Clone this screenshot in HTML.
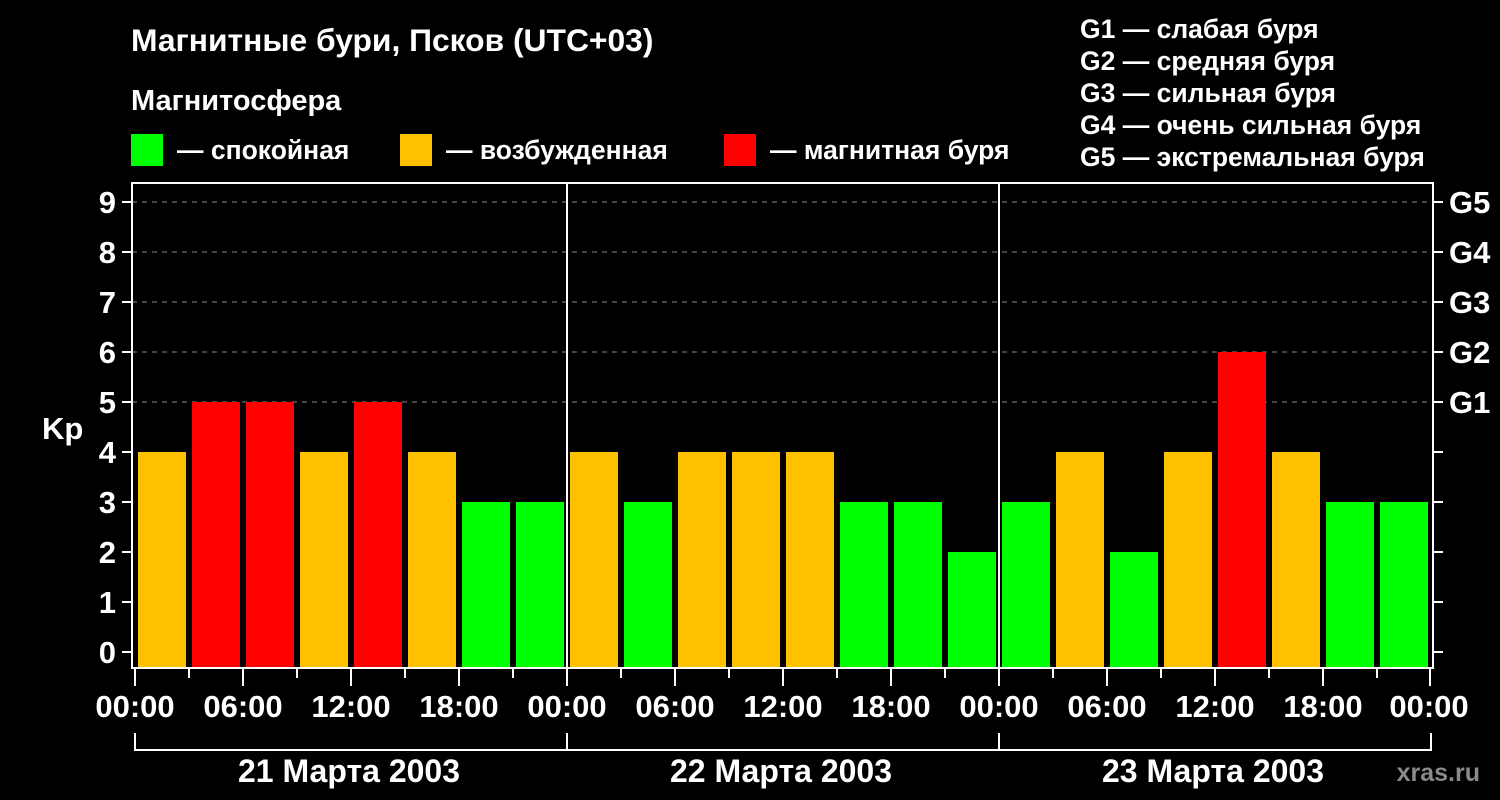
<!DOCTYPE html><html><head><meta charset="utf-8"><style>body{margin:0;background:#000;width:1500px;height:800px;overflow:hidden}svg{display:block}text{font-family:"Liberation Sans",sans-serif;font-weight:bold;fill:#fff}</style></head><body>
<svg width="1500" height="800" xmlns="http://www.w3.org/2000/svg">
<text x="131" y="51" font-size="31.8">Магнитные бури, Псков (UTC+03)</text>
<text x="131" y="110" font-size="29">Магнитосфера</text>
<rect x="131" y="134" width="32" height="32" fill="#00ff00"/><text x="177" y="159" font-size="26.5">— спокойная</text>
<rect x="400" y="134" width="32" height="32" fill="#ffc000"/><text x="446" y="159" font-size="26.5">— возбужденная</text>
<rect x="724" y="134" width="32" height="32" fill="#ff0000"/><text x="770" y="159" font-size="26.5">— магнитная буря</text>
<g font-size="26.5"><text x="1080" y="38">G1 — слабая буря</text><text x="1080" y="70">G2 — средняя буря</text><text x="1080" y="102">G3 — сильная буря</text><text x="1080" y="134">G4 — очень сильная буря</text><text x="1080" y="166">G5 — экстремальная буря</text></g>
<g stroke="#888" stroke-width="1" stroke-dasharray="5,5"><line x1="132" y1="202" x2="1432" y2="202"/><line x1="132" y1="252" x2="1432" y2="252"/><line x1="132" y1="302" x2="1432" y2="302"/><line x1="132" y1="352" x2="1432" y2="352"/><line x1="132" y1="402" x2="1432" y2="402"/></g>
<g id="bars"></g>
<g stroke="#fff" stroke-width="2" fill="none">
<rect x="132" y="183" width="1301" height="485"/>
<line x1="567" y1="183" x2="567" y2="668"/><line x1="999" y1="183" x2="999" y2="668"/>
<path d="M135 733V750H1431V733M567 733V750M999 733V750"/>
</g>
<g id="ticks" stroke="#fff" stroke-width="2"></g>
<g font-size="31" text-anchor="end" id="yl"></g>
<text x="42" y="439" font-size="31">Kp</text>
<g font-size="31" id="gl"><text x="1449" y="213">G5</text><text x="1449" y="263">G4</text><text x="1449" y="313">G3</text><text x="1449" y="363">G2</text><text x="1449" y="413">G1</text></g>
<g font-size="31" text-anchor="middle"><text x="135" y="717">00:00</text><text x="243" y="717">06:00</text><text x="351" y="717">12:00</text><text x="459" y="717">18:00</text><text x="567" y="717">00:00</text><text x="675" y="717">06:00</text><text x="783" y="717">12:00</text><text x="891" y="717">18:00</text><text x="999" y="717">00:00</text><text x="1107" y="717">06:00</text><text x="1215" y="717">12:00</text><text x="1323" y="717">18:00</text><text x="1429" y="717">00:00</text>
<text x="349" y="782" font-size="32">21 Марта 2003</text><text x="781" y="782" font-size="32">22 Марта 2003</text><text x="1213" y="782" font-size="32">23 Марта 2003</text></g>
<text x="1480" y="781" font-size="25" text-anchor="end" style="fill:#8a8a8a">xras.ru</text>
<script>
var v=[4,5,5,4,5,4,3,3,4,3,4,4,4,3,3,2,3,4,2,4,6,4,3,3],ns="http://www.w3.org/2000/svg",b=document.getElementById('bars'),t=document.getElementById('ticks'),yl=document.getElementById('yl');
function el(p,n,a){var e=document.createElementNS(ns,n);for(var k in a)e.setAttribute(k,a[k]);p.appendChild(e);return e;}
v.forEach(function(k,i){var y=652-50*k;el(b,'rect',{x:138+54*i,y:y,width:48,height:668-y,fill:k<=3?'#00ff00':k==4?'#ffc000':'#ff0000'});});
for(var i=0;i<=24;i++){var x=135+54*i;if(i==24)x=1430;el(t,'line',{x1:x,y1:668,x2:x,y2:i%2?678:686});}
for(var k=0;k<=9;k++){var y=652-50*k;el(t,'line',{x1:122,y1:y,x2:132,y2:y});el(t,'line',{x1:1433,y1:y,x2:1443,y2:y});var tx=el(yl,'text',{x:116,y:y+11});tx.textContent=k;}
</script>
</svg></body></html>
